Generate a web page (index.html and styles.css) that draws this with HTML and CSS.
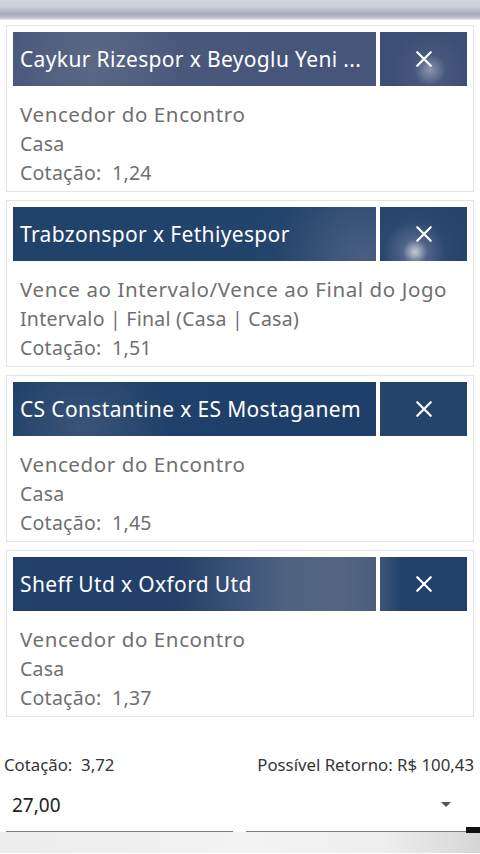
FILE: index.html
```html
<!DOCTYPE html>
<html lang="pt-BR">
<head>
<meta charset="utf-8">
<title>Cupom</title>
<link rel="stylesheet" href="styles.css">
</head>
<body>
<div class="top-strip"></div>
<main class="slip">
  <section class="bet">
    <div class="bet-head">
      <div class="bet-title t1">Caykur Rizespor x Beyoglu Yeni ...</div>
      <button class="bet-remove r1" aria-label="Remover">
        <svg viewBox="0 0 20 20" width="20" height="20"><path d="M2.5 2.5 L17.5 17.5 M17.5 2.5 L2.5 17.5" stroke="#fff" stroke-width="2.4" stroke-linecap="round" fill="none"/></svg>
      </button>
    </div>
    <div class="bet-body">
      <div class="market">Vencedor do Encontro</div>
      <div class="pick">Casa</div>
      <div class="odd">Cotação:&nbsp; 1,24</div>
    </div>
  </section>
  <section class="bet">
    <div class="bet-head">
      <div class="bet-title t2">Trabzonspor x Fethiyespor</div>
      <button class="bet-remove r2" aria-label="Remover">
        <svg viewBox="0 0 20 20" width="20" height="20"><path d="M2.5 2.5 L17.5 17.5 M17.5 2.5 L2.5 17.5" stroke="#fff" stroke-width="2.4" stroke-linecap="round" fill="none"/></svg>
      </button>
    </div>
    <div class="bet-body">
      <div class="market">Vence ao Intervalo/Vence ao Final do Jogo</div>
      <div class="pick">Intervalo | Final (Casa | Casa)</div>
      <div class="odd">Cotação:&nbsp; 1,51</div>
    </div>
  </section>
  <section class="bet">
    <div class="bet-head">
      <div class="bet-title t3">CS Constantine x ES Mostaganem</div>
      <button class="bet-remove r3" aria-label="Remover">
        <svg viewBox="0 0 20 20" width="20" height="20"><path d="M2.5 2.5 L17.5 17.5 M17.5 2.5 L2.5 17.5" stroke="#fff" stroke-width="2.4" stroke-linecap="round" fill="none"/></svg>
      </button>
    </div>
    <div class="bet-body">
      <div class="market">Vencedor do Encontro</div>
      <div class="pick">Casa</div>
      <div class="odd">Cotação:&nbsp; 1,45</div>
    </div>
  </section>
  <section class="bet">
    <div class="bet-head">
      <div class="bet-title t4">Sheff Utd x Oxford Utd</div>
      <button class="bet-remove r4" aria-label="Remover">
        <svg viewBox="0 0 20 20" width="20" height="20"><path d="M2.5 2.5 L17.5 17.5 M17.5 2.5 L2.5 17.5" stroke="#fff" stroke-width="2.4" stroke-linecap="round" fill="none"/></svg>
      </button>
    </div>
    <div class="bet-body">
      <div class="market">Vencedor do Encontro</div>
      <div class="pick">Casa</div>
      <div class="odd">Cotação:&nbsp; 1,37</div>
    </div>
  </section>
</main>
<div class="summary">
  <span>Cotação:&nbsp; 3,72</span>
  <span>Possível Retorno: R$ 100,43</span>
</div>
<div class="fields">
  <div class="field amount">27,00</div>
  <div class="field select"><span class="caret"></span></div>
  <div class="edge"></div>
</div>
<div class="bottom-strip"></div>
</body>
</html>
```

FILE: styles.css
```css
* { box-sizing: border-box; }
html, body { margin: 0; padding: 0; background: #fff; }
body {
  font-family: "Noto Sans", "Open Sans", sans-serif;
  width: 480px;
  height: 854px;
  overflow: hidden;
}
.top-strip {
  height: 20px;
  background: linear-gradient(to bottom, #d3d6e0 0%, #cbcfdb 35%, #a3a8ba 70%, #c4c7d3 90%, #eceef2 100%);
}
.slip {
  display: flex;
  flex-direction: column;
  gap: 8px;
  padding: 5px 6px 0;
}
.bet {
  border: 1px solid #e4e4e4;
  padding: 6px 6px 4px;
  background: #fff;
}
.bet-head {
  display: flex;
  gap: 4px;
  height: 54px;
}
.bet-title {
  flex: 1;
  display: flex;
  align-items: center;
  padding-left: 7px;
  color: #fff;
  font-size: 21px;
  letter-spacing: 0.35px;
  white-space: nowrap;
  overflow: hidden;
  background: #22426b;
}
.t1 { background: radial-gradient(circle at 80px 30px, #5c6886 0%, #4b587c 30%, #46557a 70%); }
.t2 { background: radial-gradient(circle at 350px 50px, #4a5f82 0%, #23446c 25%, #21426b 60%); }
.t3 { background: radial-gradient(circle at 70px 50px, #3a5478 0%, #1f406a 30%, #1e3f69 60%); }
.t4 { background: linear-gradient(to right, #21406a 0%, #243f69 45%, #4e6282 75%, #54667f 90%, #4a5d7e 100%); }
.bet-remove {
  width: 87px;
  border: 0;
  padding: 0;
  display: flex;
  align-items: center;
  justify-content: center;
  cursor: pointer;
}
.bet-remove svg { width: 18px; height: 18px; }
.r1 { background: radial-gradient(circle at 50px 38px, #8a94ac 0%, #47577b 25%, #3e4f77 60%); }
.r2 { background: radial-gradient(circle at 35px 45px, #c6ccd8 0%, #50658a 18%, #2b4870 45%, #26446c 70%); }
.r3 { background: #25446c; }
.r4 { background: linear-gradient(to right, #3e5479 0%, #22426b 25%, #21416a 100%); }
.bet-body {
  padding: 14px 0 0 7px;
  color: #707070;
  line-height: 29px;
}
.market, .pick, .odd { white-space: nowrap; }
.market { font-size: 20.5px; letter-spacing: 0.6px; }
.pick, .odd { font-size: 19.5px; letter-spacing: 0.25px; }
.summary {
  display: flex;
  justify-content: space-between;
  margin-top: 37px;
  padding: 0 6px 0 4px;
  font-size: 16.8px;
  line-height: 22px;
  color: #353535;
}
.fields {
  display: flex;
  align-items: flex-end;
  margin-top: 15px;
  padding-left: 6px;
}
.field {
  height: 41px;
  border-bottom: 1px solid #7c7c7c;
}
.amount {
  width: 227px;
  padding: 0 6px;
  font-size: 19px;
  line-height: 28px;
  color: #222;
}
.select {
  width: 220px;
  margin-left: 13px;
  display: flex;
  justify-content: flex-end;
  padding: 11px 15px 0 0;
}
.caret {
  width: 0;
  height: 0;
  border-left: 5px solid transparent;
  border-right: 5px solid transparent;
  border-top: 5px solid #555;
}
.edge {
  width: 14px;
  height: 6px;
  margin-bottom: -1px;
  background: #111;
}
.bottom-strip {
  height: 21px;
  background: linear-gradient(to right, #ececec 0%, #f1f1f1 40%, #f4f4f4 50%, #eeeeee 80%, #d6d6d6 100%);
}
```
